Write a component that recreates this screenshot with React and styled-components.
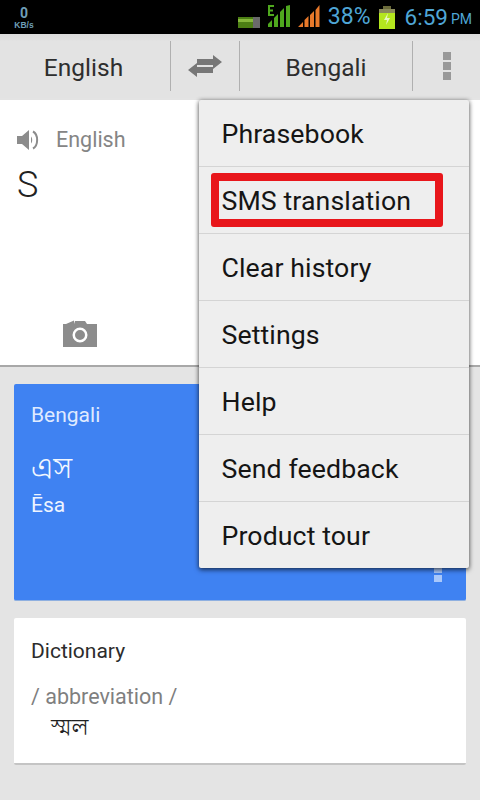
import React from "react";
import styled, { createGlobalStyle } from "styled-components";

const Global = createGlobalStyle`
  html, body { margin: 0; padding: 0; background: #e4e4e4; }
  body { font-family: Roboto, "Liberation Sans", sans-serif; overflow: hidden; }
  * { box-sizing: border-box; }
`;

const Screen = styled.div`
  position: relative;
  width: 480px;
  height: 800px;
  overflow: hidden;
  background: #e4e4e4;
  display: flex;
  flex-direction: column;
`;

const StatusBar = styled.div`
  height: 34px;
  background: #000;
  display: flex;
  align-items: center;
  color: #4f9fc9;
  flex: none;
`;

const Speed = styled.div`
  width: 48px;
  display: flex;
  flex-direction: column;
  align-items: center;
  font-weight: 700;
  color: #6f9fb8;
  margin-top: 2px;
`;
const SpeedValue = styled.span`
  font-size: 14px;
  line-height: 14px;
`;
const SpeedUnit = styled.span`
  font-size: 8.5px;
  line-height: 9px;
  margin-top: 1px;
  font-family: "Liberation Sans", sans-serif;
`;

const StatusRight = styled.div`
  margin-left: auto;
  margin-right: 8px;
  display: flex;
  align-items: center;
  height: 100%;
`;
const Percent = styled.span`
  font-size: 23px;
  line-height: 34px;
  margin-left: 8px;
  color: #4fa6d6;
`;
const Clock = styled.span`
  font-size: 22.5px;
  line-height: 34px;
  margin-left: 10px;
  color: #4fa6d6;
`;
const Meridiem = styled.span`
  font-size: 14px;
  line-height: 34px;
  margin-left: 3px;
  margin-top: 3px;
  color: #4fa6d6;
`;

const Toolbar = styled.div`
  height: 64px;
  flex: none;
  background: linear-gradient(#dcdcdc, #e3e3e3 12%, #e3e3e3);
  display: flex;
  align-items: center;
`;
const LangCell = styled.div`
  width: ${(p) => p.$w}px;
  height: 50px;
  display: flex;
  align-items: center;
  justify-content: center;
  font-size: 24.5px;
  color: #2e2e2e;
  padding-top: ${(p) => (p.$text ? 3 : 0)}px;
  padding-right: ${(p) => (p.$shift ? 3 : 0)}px;
  border-right: ${(p) => (p.$last ? "none" : "1px solid #b0b0b0")};
`;

const SourcePanel = styled.div`
  height: 267px;
  flex: none;
  margin-top: 2px;
  background: #fff;
  border-bottom: 2px solid #a8a8a8;
  padding: 27px 17px 0;
  display: flex;
  flex-direction: column;
`;
const SourceHead = styled.div`
  display: flex;
  align-items: center;
  gap: 16px;
  height: 26px;
`;
const SourceLang = styled.span`
  font-size: 21.5px;
  padding-bottom: 2px;
  color: #858585;
`;
const SourceText = styled.div`
  font-size: 36px;
  line-height: 40px;
  margin-top: 12px;
  color: #222;
  font-weight: 300;
`;
const CameraSlot = styled.div`
  margin-top: auto;
  margin-bottom: 18px;
  margin-left: 46px;
  height: 27px;
  display: flex;
`;

const Results = styled.div`
  display: flex;
  flex-direction: column;
  gap: 17px;
  padding: 17px 14px 0;
`;

const BlueCard = styled.div`
  position: relative;
  height: 217px;
  background: #3f82f2;
  border-bottom: 1px solid #8fb0e0;
  border-radius: 2px;
  padding: 19px 17px;
  color: #e6f0ff;
`;
const BlueLabel = styled.div`
  font-size: 21px;
  line-height: 24px;
  color: #dfeaff;
`;
const BlueWord = styled.div`
  font-family: "Noto Sans Bengali", "Lohit Bengali", "Noto Sans", sans-serif;
  font-weight: 300;
  font-size: 31px;
  line-height: 40px;
  margin-top: 24px;
  color: #f2f7ff;
`;
const BlueTranslit = styled.div`
  font-size: 21px;
  line-height: 26px;
  margin-top: 1px;
  color: #eef4ff;
`;
const CardDots = styled.div`
  position: absolute;
  right: 24px;
  top: 170px;
  width: 8px;
  height: 28px;
  display: flex;
  flex-direction: column;
  justify-content: flex-end;
  gap: 2px;
`;
const CardDot = styled.span`
  display: block;
  width: 8px;
  height: 7px;
  background: #a9c8fb;
`;

const DictCard = styled.div`
  height: 147px;
  background: #fff;
  border-bottom: 2px solid #c4c4c4;
  border-radius: 2px;
  padding: 21px 17px;
`;
const DictTitle = styled.div`
  font-size: 21px;
  line-height: 24px;
  color: #2c2c2c;
`;
const DictPos = styled.div`
  font-size: 21.5px;
  line-height: 24px;
  margin-top: 22px;
  color: #7f7f7f;
`;
const DictWord = styled.div`
  font-family: "Noto Sans Bengali", "Lohit Bengali", "Noto Sans", sans-serif;
  font-weight: 300;
  font-size: 24px;
  line-height: 30px;
  margin-top: 5px;
  margin-left: 20px;
  color: #222;
`;

const Menu = styled.div`
  position: absolute;
  left: 199px;
  top: 100px;
  width: 270px;
  height: 468px;
  background: #eeeeee;
  border-radius: 2px;
  box-shadow: 0 2px 5px rgba(0, 0, 0, 0.55), 0 0 4px rgba(0, 0, 0, 0.3);
  display: flex;
  flex-direction: column;
`;
const MenuItem = styled.div`
  position: relative;
  flex: 1;
  display: flex;
  align-items: center;
  padding-left: 22.500px;
  padding-top: 2px;
  font-size: 26.700px;
  letter-spacing: 0.1px;
  color: #151515;
  border-bottom: ${(p) => (p.$last ? "none" : "1px solid #d4d4d4")};
`;
const Highlight = styled.div`
  position: absolute;
  left: 12px;
  top: 6px;
  width: 232px;
  height: 54px;
  border: 8px solid #e8161b;
  border-radius: 3px;
`;

const MoreDots = styled.div`
  display: flex;
  flex-direction: column;
  gap: 2px;
`;
const MoreDot = styled.span`
  display: block;
  width: 8px;
  height: 8px;
  background: #999;
`;

const Icon = styled.svg`
  display: block;
  flex: none;
  margin-top: ${(p) => p.$top || 0}px;
  margin-left: ${(p) => p.$left || 0}px;
`;

export default function App() {
  const items = ["Phrasebook", "SMS translation", "Clear history", "Settings", "Help", "Send feedback", "Product tour"];
  return (
    <Screen>
      <Global />
      <StatusBar>
        <Speed>
          <SpeedValue>0</SpeedValue>
          <SpeedUnit>KB/s</SpeedUnit>
        </Speed>
        <StatusRight>
          <Icon width="22" height="11" viewBox="0 0 22 11" $top={10}>
            <rect x="0" y="0" width="15" height="11" fill="#4c7f14" />
            <rect x="0" y="2" width="15" height="3" fill="#86b83c" />
            <rect x="15" y="0" width="7" height="11" fill="#6a6a6a" />
          </Icon>
          <Icon width="22" height="22" viewBox="0 0 22 22" $top={-3} $left={8}>
            <path d="M0 22v-3l4-4v7zM6 22V13l4-4v13zM12 22V7l4-4v19zM18 22V1l4-1v22z" fill="#4fa81e" />
            <path d="M6 1H1v9h5M1 5.500h4" stroke="#4fa81e" strokeWidth="2" fill="none" />
          </Icon>
          <Icon width="22" height="22" viewBox="0 0 22 22" $top={-3} $left={8}>
            <path d="M0 22l5-5v5zM6.500 22v-7l4-4v11zM12 22V10l4-4v16zM17.500 22V5l4-5v22z" fill="#e8792a" />
          </Icon>
          <Percent>38%</Percent>
          <Icon width="16" height="23" viewBox="0 0 16 23" $left={8}>
            <rect x="4" y="0" width="8" height="3" fill="#6a6a3a" />
            <rect x="0" y="3" width="16" height="20" fill="#b4e61e" />
            <rect x="0" y="3" width="16" height="4" fill="#8a8a5a" />
            <path d="M9 7L5 14h3l-1 5 4-7H8z" fill="#e8f6c0" />
          </Icon>
          <Clock>6:59</Clock>
          <Meridiem>PM</Meridiem>
        </StatusRight>
      </StatusBar>

      <Toolbar>
        <LangCell $w={171} $text $shift>English</LangCell>
        <LangCell $w={69}>
          <Icon width="34" height="22" viewBox="0 0 34 22">
            <path d="M34 7L25 0v4H9v6h16v4z" fill="#777" />
            <path d="M0 15l9-7v4h16v6H9v4z" fill="#777" />
          </Icon>
        </LangCell>
        <LangCell $w={173} $text>Bengali</LangCell>
        <LangCell $w={67} $last>
          <MoreDots>
            <MoreDot />
            <MoreDot />
            <MoreDot />
          </MoreDots>
        </LangCell>
      </Toolbar>

      <SourcePanel>
        <SourceHead>
          <Icon width="23" height="22" viewBox="0 0 23 22">
            <path d="M0 7h5l7-6v20l-7-6H0z" fill="#8c8c8c" />
            <path d="M14 7.500c1.600 1.400 1.600 5.600 0 7z" fill="#8c8c8c" />
            <path d="M16 2.500c5.500 3 5.500 14 0 17" stroke="#8c8c8c" strokeWidth="2" fill="none" />
          </Icon>
          <SourceLang>English</SourceLang>
        </SourceHead>
        <SourceText>S</SourceText>
        <CameraSlot>
          <Icon width="34" height="27" viewBox="0 0 34 27">
            <path fillRule="evenodd" fill="#8c8c8c" d="M0 4h3l8-3.500v3.500l1-3h10l2 3h10v23H0zM17 7.500a7.500 7.500 0 1 0 0 15a7.500 7.500 0 1 0 0-15zM17 10a5 5 0 1 1 0 10a5 5 0 1 1 0-10z" />
          </Icon>
        </CameraSlot>
      </SourcePanel>

      <Results>
        <BlueCard>
          <BlueLabel>Bengali</BlueLabel>
          <BlueWord>এস</BlueWord>
          <BlueTranslit>Ēsa</BlueTranslit>
          <CardDots>
            <CardDot />
            <CardDot />
          </CardDots>
        </BlueCard>
        <DictCard>
          <DictTitle>Dictionary</DictTitle>
          <DictPos>/ abbreviation /</DictPos>
          <DictWord>স্মল</DictWord>
        </DictCard>
      </Results>

      <Menu>
        {items.map((t, i) => (
          <MenuItem key={t} $last={i === items.length - 1}>
            {t}
            {i === 1 && <Highlight />}
          </MenuItem>
        ))}
      </Menu>
    </Screen>
  );
}
